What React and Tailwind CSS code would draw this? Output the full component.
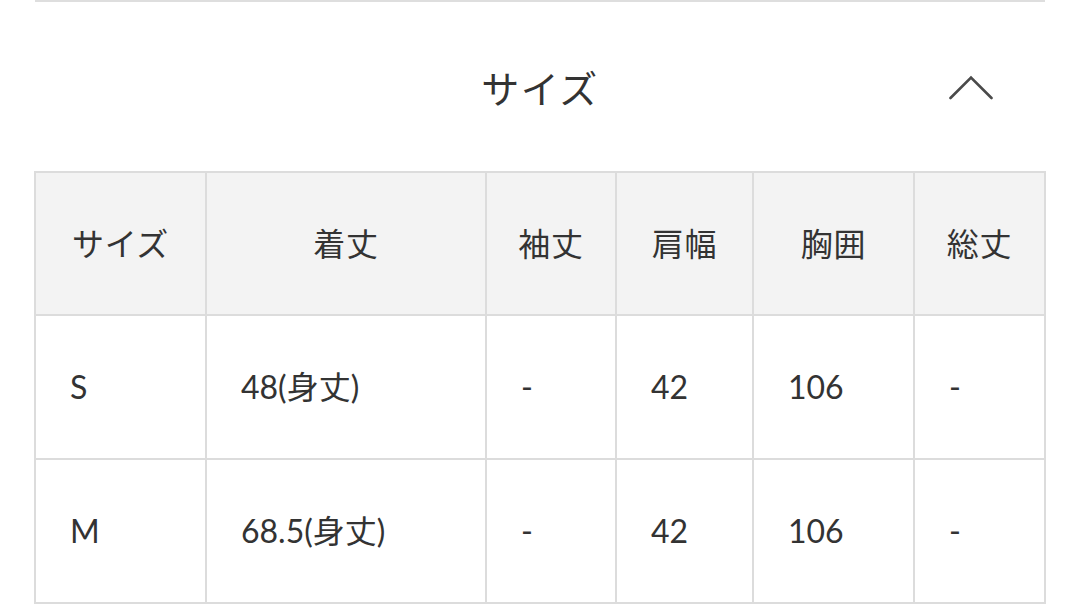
import React from "react";

const headers = ["サイズ", "着丈", "袖丈", "肩幅", "胸囲", "総丈"];
const widths = ["w-[171px]", "w-[280px]", "w-[130px]", "w-[137px]", "w-[161px]", "w-[131px]"];

const rows = [
  ["S", "48(身丈)", "-", "42", "106", "-"],
  ["M", "68.5(身丈)", "-", "42", "106", "-"],
];

const App = () => {
  return (
    <div
      className="w-[1080px] h-[608px] bg-white text-[#333] overflow-hidden"
      style={{ fontFamily: "Lato, 'Noto Sans CJK JP', sans-serif" }}
    >
      <div className="mx-[35px] border-t-2 border-[#dedede]">
        <div className="grid grid-cols-[1fr_auto_1fr] items-center h-[169px] pt-[3px]">
          <div />
          <h2 className="text-[38px] leading-none tracking-[0.04em]">サイズ</h2>
          <div className="flex justify-end pr-[52px]">
            <svg width="44" height="26" viewBox="0 0 44 26" fill="none">
              <path
                d="M1.5 23 L22 2.5 L42.5 23"
                stroke="#4a4a4a"
                strokeWidth="2.6"
                strokeLinecap="round"
                strokeLinejoin="miter"
              />
            </svg>
          </div>
        </div>

        {/* size table */}
        <table className="w-[1010px] -ml-px table-fixed border-collapse text-[32px]">
          <colgroup>
            {widths.map((w, i) => (
              <col key={i} className={w} />
            ))}
          </colgroup>
          <thead>
            <tr className="h-[143px] bg-[#f3f3f3]">
              {headers.map((h) => (
                <th
                  key={h}
                  className="border-2 border-[#dcdcdc] font-normal text-center align-middle p-0 tracking-[0.02em]"
                >
                  {h}
                </th>
              ))}
            </tr>
          </thead>
          <tbody>
            {rows.map((row, r) => (
              <tr key={r} className="h-[144px]">
                {row.map((cell, c) => (
                  <td
                    key={c}
                    className="border-2 border-[#dcdcdc] text-left align-middle pl-[34px] pr-2"
                  >
                    {cell}
                  </td>
                ))}
              </tr>
            ))}
          </tbody>
        </table>
      </div>
    </div>
  );
};

export default App;
